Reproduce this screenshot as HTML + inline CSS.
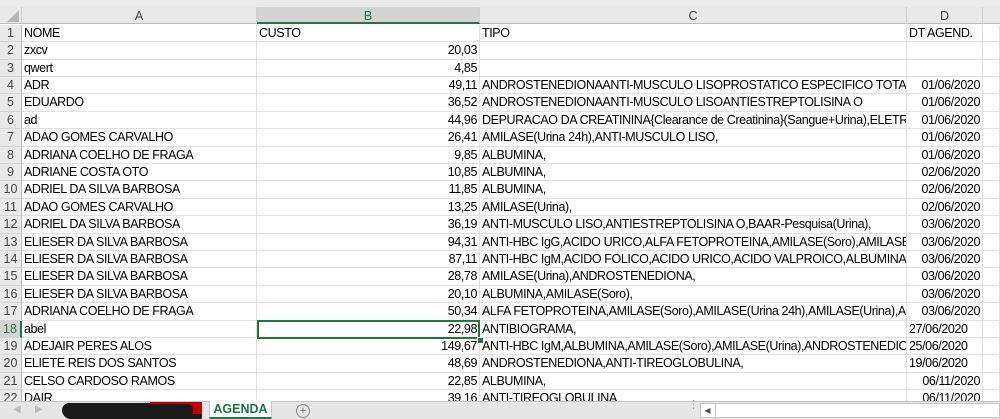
<!DOCTYPE html>
<html><head><meta charset="utf-8">
<style>
body{margin:0;width:1000px;height:419px;overflow:hidden;background:#fff;font-family:"Liberation Sans",sans-serif;position:relative}
.top{position:absolute;left:0;top:0;width:1000px;height:7px;background:#ebebeb}
.hdr{position:absolute;top:7px;height:17px;background:#e9e9e9;border-right:1px solid #cfcfcf;border-bottom:1px solid #bdbdbd;box-sizing:border-box;text-align:center;font-size:12.5px;line-height:18px;color:#444}
.rh{position:absolute;left:0;width:22px;height:17.4px;background:#e9e9e9;border-right:1px solid #bdbdbd;border-bottom:1px solid #d4d4d4;box-sizing:border-box;text-align:center;font-size:12.5px;line-height:17px;color:#444}
.r{position:absolute;left:22px;width:978px;height:17.4px;border-bottom:1px solid #e1e1e1;box-sizing:border-box;font-size:12.5px;line-height:17px;color:#000;letter-spacing:-0.4px}
.r div{position:absolute;top:0;height:100%;overflow:hidden;white-space:nowrap;border-right:1px solid #e1e1e1;box-sizing:border-box;padding:0 2px}
.a{left:0;width:235px}.b{left:235px;width:223px;text-align:right}.c{left:458px;width:427px}.d{left:885px;width:76px}.e{left:961px;width:17px}
.dr{text-align:right}
.tabs{position:absolute;left:0;top:401px;width:1000px;height:18px;background:#e6e6e6;border-top:1px solid #c6c6c6;box-sizing:border-box}
</style></head><body>
<div class="top"></div>
<div class="hdr" style="left:0;width:22px;"><svg width="14" height="14" style="position:absolute;left:6px;top:2px"><polygon points="13,1 13,13 1,13" fill="#b5b5b5"/></svg></div>
<div class="hdr" style="left:22px;width:235px">A</div>
<div class="hdr" style="left:257px;width:223px;background:#d3d3d3;color:#217346;border-bottom:2px solid #217346">B</div>
<div class="hdr" style="left:480px;width:427px">C</div>
<div class="hdr" style="left:907px;width:76px">D</div>
<div class="hdr" style="left:983px;width:17px;border-right:none"></div>

<div class="rh" style="top:24.8px">1</div><div class="r" style="top:24.8px"><div class="a">NOME</div><div class="b" style="text-align:left">CUSTO</div><div class="c">TIPO</div><div class="d">DT AGEND.</div><div class="e"></div></div>
<div class="rh" style="top:42.2px">2</div><div class="r" style="top:42.2px"><div class="a">zxcv</div><div class="b">20,03</div><div class="c"></div><div class="d"></div><div class="e"></div></div>
<div class="rh" style="top:59.6px">3</div><div class="r" style="top:59.6px"><div class="a">qwert</div><div class="b">4,85</div><div class="c"></div><div class="d"></div><div class="e"></div></div>
<div class="rh" style="top:77px">4</div><div class="r" style="top:77px"><div class="a">ADR</div><div class="b">49,11</div><div class="c">ANDROSTENEDIONAANTI-MUSCULO LISOPROSTATICO ESPECIFICO TOTAL, ANT</div><div class="d dr">01/06/2020</div><div class="e"></div></div>
<div class="rh" style="top:94.4px">5</div><div class="r" style="top:94.4px"><div class="a">EDUARDO</div><div class="b">36,52</div><div class="c">ANDROSTENEDIONAANTI-MUSCULO LISOANTIESTREPTOLISINA O</div><div class="d dr">01/06/2020</div><div class="e"></div></div>
<div class="rh" style="top:111.8px">6</div><div class="r" style="top:111.8px"><div class="a">ad</div><div class="b">44,96</div><div class="c">DEPURACAO DA CREATININA{Clearance de Creatinina}(Sangue+Urina),ELETRO</div><div class="d dr">01/06/2020</div><div class="e"></div></div>
<div class="rh" style="top:129.2px">7</div><div class="r" style="top:129.2px"><div class="a">ADAO GOMES CARVALHO</div><div class="b">26,41</div><div class="c">AMILASE(Urina 24h),ANTI-MUSCULO LISO,</div><div class="d dr">01/06/2020</div><div class="e"></div></div>
<div class="rh" style="top:146.6px">8</div><div class="r" style="top:146.6px"><div class="a">ADRIANA COELHO DE FRAGA</div><div class="b">9,85</div><div class="c">ALBUMINA,</div><div class="d dr">01/06/2020</div><div class="e"></div></div>
<div class="rh" style="top:164px">9</div><div class="r" style="top:164px"><div class="a">ADRIANE COSTA OTO</div><div class="b">10,85</div><div class="c">ALBUMINA,</div><div class="d dr">02/06/2020</div><div class="e"></div></div>
<div class="rh" style="top:181.4px">10</div><div class="r" style="top:181.4px"><div class="a">ADRIEL DA SILVA BARBOSA</div><div class="b">11,85</div><div class="c">ALBUMINA,</div><div class="d dr">02/06/2020</div><div class="e"></div></div>
<div class="rh" style="top:198.8px">11</div><div class="r" style="top:198.8px"><div class="a">ADAO GOMES CARVALHO</div><div class="b">13,25</div><div class="c">AMILASE(Urina),</div><div class="d dr">02/06/2020</div><div class="e"></div></div>
<div class="rh" style="top:216.2px">12</div><div class="r" style="top:216.2px"><div class="a">ADRIEL DA SILVA BARBOSA</div><div class="b">36,19</div><div class="c">ANTI-MUSCULO LISO,ANTIESTREPTOLISINA O,BAAR-Pesquisa(Urina),</div><div class="d dr">03/06/2020</div><div class="e"></div></div>
<div class="rh" style="top:233.6px">13</div><div class="r" style="top:233.6px"><div class="a">ELIESER DA SILVA BARBOSA</div><div class="b">94,31</div><div class="c">ANTI-HBC IgG,ACIDO URICO,ALFA FETOPROTEINA,AMILASE(Soro),AMILASE(Ur</div><div class="d dr">03/06/2020</div><div class="e"></div></div>
<div class="rh" style="top:251px">14</div><div class="r" style="top:251px"><div class="a">ELIESER DA SILVA BARBOSA</div><div class="b">87,11</div><div class="c">ANTI-HBC IgM,ACIDO FOLICO,ACIDO URICO,ACIDO VALPROICO,ALBUMINA,ALI</div><div class="d dr">03/06/2020</div><div class="e"></div></div>
<div class="rh" style="top:268.4px">15</div><div class="r" style="top:268.4px"><div class="a">ELIESER DA SILVA BARBOSA</div><div class="b">28,78</div><div class="c">AMILASE(Urina),ANDROSTENEDIONA,</div><div class="d dr">03/06/2020</div><div class="e"></div></div>
<div class="rh" style="top:285.8px">16</div><div class="r" style="top:285.8px"><div class="a">ELIESER DA SILVA BARBOSA</div><div class="b">20,10</div><div class="c">ALBUMINA,AMILASE(Soro),</div><div class="d dr">03/06/2020</div><div class="e"></div></div>
<div class="rh" style="top:303.2px">17</div><div class="r" style="top:303.2px"><div class="a">ADRIANA COELHO DE FRAGA</div><div class="b">50,34</div><div class="c">ALFA FETOPROTEINA,AMILASE(Soro),AMILASE(Urina 24h),AMILASE(Urina),AN</div><div class="d dr">03/06/2020</div><div class="e"></div></div>
<div class="rh" style="top:320.6px;background:#d3d3d3;color:#217346;border-right:2px solid #217346">18</div><div class="r" style="top:320.6px"><div class="a">abel</div><div class="b">22,98</div><div class="c">ANTIBIOGRAMA,</div><div class="d">27/06/2020</div><div class="e"></div></div>
<div class="rh" style="top:338px">19</div><div class="r" style="top:338px"><div class="a">ADEJAIR PERES ALOS</div><div class="b">149,67</div><div class="c">ANTI-HBC IgM,ALBUMINA,AMILASE(Soro),AMILASE(Urina),ANDROSTENEDION</div><div class="d">25/06/2020</div><div class="e"></div></div>
<div class="rh" style="top:355.4px">20</div><div class="r" style="top:355.4px"><div class="a">ELIETE REIS DOS SANTOS</div><div class="b">48,69</div><div class="c">ANDROSTENEDIONA,ANTI-TIREOGLOBULINA,</div><div class="d">19/06/2020</div><div class="e"></div></div>
<div class="rh" style="top:372.8px">21</div><div class="r" style="top:372.8px"><div class="a">CELSO CARDOSO RAMOS</div><div class="b">22,85</div><div class="c">ALBUMINA,</div><div class="d dr">06/11/2020</div><div class="e"></div></div>
<div class="rh" style="top:390.2px">22</div><div class="r" style="top:390.2px"><div class="a">DAIR</div><div class="b">39,16</div><div class="c">ANTI-TIREOGLOBULINA</div><div class="d dr">06/11/2020</div><div class="e"></div></div>

<div style="position:absolute;left:257px;top:320px;width:223px;height:19px;border:2px solid #217346;box-sizing:border-box"></div>
<div style="position:absolute;left:477px;top:337px;width:5px;height:5px;background:#217346;border:1px solid #fff"></div>

<div class="tabs">
  <span style="position:absolute;left:13px;top:2px;font-size:10px;color:#bbb">&#9664;</span>
  <span style="position:absolute;left:35px;top:2px;font-size:10px;color:#bbb">&#9654;</span>
  <div style="position:absolute;left:62px;top:1px;width:140px;height:16px;background:#1a1a1a;border-radius:8px 3px 2px 10px"></div>
  <div style="position:absolute;left:150px;top:0px;width:52px;height:12px;background:#c00000"></div>
  <div style="position:absolute;left:145px;top:2px;width:48px;height:15px;background:#1a1a1a;border-radius:5px"></div>
  <div style="position:absolute;left:209px;top:-1px;width:63px;height:18px;background:#fff;border-left:1px solid #c6c6c6;border-right:1px solid #c6c6c6;border-bottom:2px solid #217346;box-sizing:border-box;text-align:center;font-weight:bold;color:#217346;font-size:12.5px;line-height:17px">AGENDA</div>
  <div style="position:absolute;left:296px;top:2px;width:12px;height:12px;border:1px solid #888;border-radius:50%;text-align:center;font-size:11px;line-height:12px;color:#666">+</div>
  <span style="position:absolute;left:688px;top:1px;font-size:11px;color:#aaa;line-height:5px">&#8942;</span>
  <div style="position:absolute;left:700px;top:1px;width:300px;height:15px;background:#fff;border:1px solid #c6c6c6;box-sizing:border-box"></div>
  <div style="position:absolute;left:700px;top:1px;width:16px;height:15px;border-right:1px solid #c6c6c6;box-sizing:border-box;font-size:8px;color:#555;text-align:center;line-height:15px">&#9664;</div>
</div>
</body></html>
